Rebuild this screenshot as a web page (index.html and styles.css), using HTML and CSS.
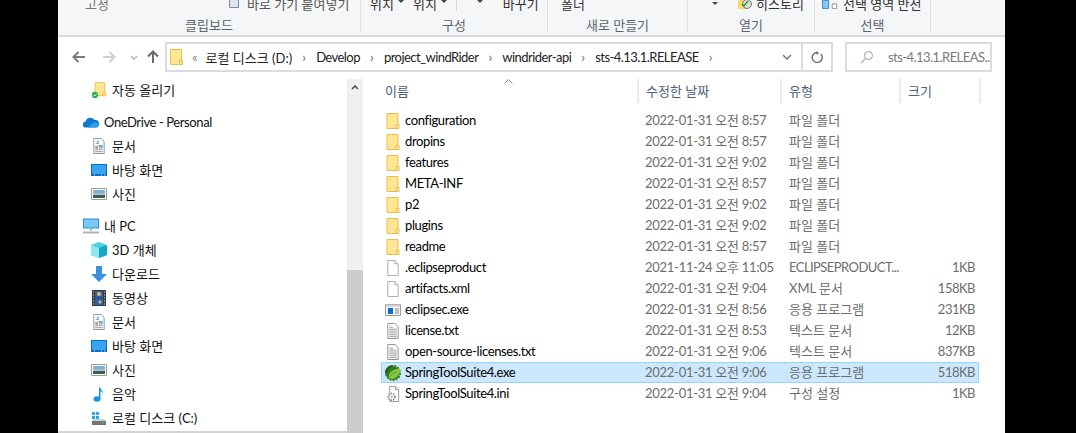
FILE: index.html
```html
<!DOCTYPE html>
<html lang="ko">
<head>
<meta charset="UTF-8">
<title>sts-4.13.1.RELEASE</title>
<link rel="stylesheet" href="styles.css">
</head>
<body>
<svg class="defs" width="0" height="0">
    <symbol id="folder" viewBox="0 0 13 16">
        <path d="M.5.5h11v15H.5z" fill="#ffe692" stroke="#e6c04f"/>
        <path d="M9.5 11.500h3v4h-3z" fill="#ffe692" stroke="#e6c04f"/>
    </symbol>
    <symbol id="file" viewBox="0 0 14 17">
        <path d="M1.500.5h7.500l3.500 3.500v12.500h-11z" fill="#fff" stroke="#a8a8a8"/>
        <path d="M9 .5v3.500h3.500" fill="#f0f0f0" stroke="#a8a8a8"/>
    </symbol>
    <symbol id="text" viewBox="0 0 14 17">
        <path d="M1.500.5h7.500l3.500 3.500v12.500h-11z" fill="#fff" stroke="#8c8c8c"/>
        <path d="M3 6.500h8M3 8.500h8M3 10.500h8M3 12.500h8M3 14.500h8M3 4.500h4" stroke="#9a9a9a"/>
    </symbol>
    <symbol id="doc" viewBox="0 0 14 17">
        <path d="M1.500.5h7.500l3.500 3.500v12.500h-11z" fill="#fff" stroke="#8c8c8c"/>
        <path d="M3 8.500h8M3 12.500h8M3 14.500h8" stroke="#9a9a9a"/>
        <path d="M5 3.500h2M4 5.500h3M7 8.500h4M7 10.500h4" stroke="#2f7fc8"/>
        <path d="M3 10.500h3" stroke="#3a3a3a"/>
    </symbol>
    <symbol id="desktop" viewBox="0 0 16 12">
        <path d="M0 0h16v12h-16z" fill="#0f6cbd"/>
        <path d="M1 1h14v9h-14z" fill="#35a4f4"/>
        <path d="M3 11h1M10 11h1M13 11h1" stroke="#cfe8fb"/>
    </symbol>
    <symbol id="picture" viewBox="0 0 16 12">
        <path d="M.5.5h15v11h-15z" fill="#fff" stroke="#9a9a9a"/>
        <path d="M2 2h12v4h-12z" fill="#7fb2dc"/>
        <path d="M2 5l5 1 7-1v2h-12z" fill="#b8c8b0"/>
        <path d="M2 7h12v3h-12z" fill="#3f5f5a"/>
    </symbol>
    <symbol id="exe" viewBox="0 0 16 12">
        <path d="M.5.500h15v11h-15z" fill="#f4f4f4" stroke="#9a9a9a"/>
        <path d="M.5.500h15v2h-15z" fill="#cfcfcf"/>
        <path d="M3 4h5v6h-5z" fill="#0a6fd0"/>
        <path d="M10 5h4M10 7h4M10 9h4" stroke="#8a8a8a"/>
    </symbol>
    <symbol id="pin" viewBox="0 0 16 18">
        <path d="M3.500.5h11v15h-11z" fill="#ffe692" stroke="#e6c04f"/>
        <path d="M12.500 11.500h3v4h-3z" fill="#ffe692" stroke="#e6c04f"/>
        <circle cx="3.500" cy="14.500" r="3.500" fill="#21b35a"/>
        <path d="M1.800 14.500l1.300 1.300 2.300-2.500" fill="none" stroke="#fff"/>
    </symbol>
    <symbol id="cloud" viewBox="0 0 16 11">
        <path d="M3 11a3 3 0 0 1-.500-6 5 5 0 0 1 9-1.500 3.800 3.800 0 0 1 1.500 7.500z" fill="#0f78d4"/>
        <path d="M5 11l4-4 3-1.500 4 2.500-2 3z" fill="#2c9de8"/>
    </symbol>
    <symbol id="pc" viewBox="0 0 16 15">
        <path d="M0 0h16v10h-16z" fill="#2b8fdc"/>
        <path d="M1 1h14v8h-14z" fill="#7cc8f8"/>
        <path d="M7 10h2v2h-2z" fill="#9aa4ac"/>
        <path d="M0 14h16" stroke="#a9b4bd" stroke-width="2"/>
    </symbol>
    <symbol id="cube" viewBox="0 0 16 16">
        <path d="M8 0l8 3v10l-8 3-8-3v-10z" fill="#45d3e3"/>
        <path d="M8 6l8-3v10l-8 3z" fill="#16a6c0"/>
        <path d="M0 3l8 3v10l-8-3z" fill="#8ce6ef"/>
    </symbol>
    <symbol id="down" viewBox="0 0 16 16">
        <path d="M5 0h6v8h5l-8 8-8-8h5z" fill="#3c8ede"/>
    </symbol>
    <symbol id="video" viewBox="0 0 14 16">
        <path d="M0 0h14v16h-14z" fill="#3b3b3b"/>
        <path d="M3 1h8v6.500h-8zM3 8.500h8v6.500h-8z" fill="#2f62c0"/>
        <circle cx="7" cy="4" r="2" fill="#e2c23a"/>
        <circle cx="8" cy="12" r="1.500" fill="#e2c23a"/>
        <path d="M1 2h1M1 5h1M1 8h1M1 11h1M1 14h1M12 2h1M12 5h1M12 8h1M12 11h1M12 14h1" stroke="#ddd"/>
    </symbol>
    <symbol id="music" viewBox="0 0 12 16">
        <ellipse cx="4" cy="13" rx="3.500" ry="2.800" fill="#1295e6"/>
        <path d="M6 13v-13c.5 3 4.500 4 4 8-.5-2-2-3-2.500-3v8z" fill="#1295e6"/>
    </symbol>
    <symbol id="drive" viewBox="0 0 16 14">
        <path d="M1 1h3v3h-3zM5 1h3v3h-3zM1 5h3v3h-3zM5 5h3v3h-3z" fill="#25a8e8"/>
        <path d="M3 8h10l2 2h-14z" fill="#d0d0d0"/>
        <path d="M1 10h14v4h-14z" fill="#6f7478"/>
        <path d="M11 11.500h2v1h-2z" fill="#4ee04e"/>
    </symbol>
    <symbol id="spring" viewBox="0 0 16 16">
        <circle cx="8" cy="8" r="6.800" fill="#2f7d22" stroke="#2f7d22" stroke-width="2.400" stroke-dasharray="2 1"/>
        <path d="M0 8a8 8 0 0 1 8-8l-1 2-3 1-1 3-1 2-1 2z" fill="#1f5f18"/>
        <path d="M4 12.500c-1-5 4-8.500 11-9 .5 6-3.500 10.500-9 10.500z" fill="#8cc63f"/>
        <path d="M4 12.500c3-4 5-5 8-6" fill="none" stroke="#5fa32c"/>
    </symbol>
    <symbol id="ini" viewBox="0 0 14 17">
        <path d="M3.500.5h6l3.500 3.500v12.500h-9.500z" fill="#fff" stroke="#9a9a9a"/>
        <path d="M9.500 .5v3.500h3.500" fill="none" stroke="#9a9a9a"/>
        <circle cx="5.500" cy="11.500" r="3.500" fill="#fff" stroke="#8c8c8c" stroke-width="2" stroke-dasharray="1.500 1"/>
        <circle cx="5.500" cy="11.500" r="1.500" fill="#c4c4c4"/>
    </symbol>
</svg>

<div class="window">
    <div class="ribbon">
        <div class="group g-clip"><div class="tools t-clip"><span class="pin-word">고정</span><svg class="mini" viewBox="0 0 10 10"><path d="M.5.500h9v9h-9z" fill="#dfe6ee" stroke="#7f8fa3"/></svg><span>바로 가기 붙여넣기</span></div><div class="label">클립보드</div></div>
        <div class="group g-org"><div class="tools t-org"><span>위치</span><i class="caret"></i><span>위치</span><i class="caret"></i><b class="tick"></b><i class="caret solo"></i><span>바꾸기</span></div><div class="label">구성</div></div>
        <div class="group g-new"><div class="tools t-new"><span>폴더</span></div><div class="label">새로 만들기</div></div>
        <div class="group g-open"><div class="tools t-open"><i class="caret"></i><svg class="mini hist" viewBox="0 0 14 12"><path d="M0 0h8v12h-8z" fill="#ffd966"/><circle cx="9" cy="7" r="4.500" fill="#ddd" stroke="#777"/><path d="M4 7l2 2 4-5" fill="none" stroke="#2a9d2a" stroke-width="1.500"/></svg><span>히스토리</span></div><div class="label">열기</div></div>
        <div class="group g-sel"><div class="tools t-sel"><svg class="mini pair" viewBox="0 0 18 12"><path d="M.5 2.500h7v9h-7z" fill="#8cc4f0" stroke="#2f7fc8"/><path d="M11.500 6.500h5v5h-5z" fill="#fff" stroke="#8c8c8c"/></svg><span>선택 영역 반전</span></div><div class="label">선택</div></div>
    </div>

    <div class="toolbar">
        <div class="nav-buttons">
            <svg class="arrow" viewBox="0 0 14 12"><path d="M13 6h-11M6.500 1l-5 5 5 5" fill="none" stroke="#7a7a7a" stroke-width="2"/></svg>
            <svg class="arrow off" viewBox="0 0 14 12"><path d="M1 6h11M7.500 1l5 5-5 5" fill="none" stroke="#cfcfcf" stroke-width="2"/></svg>
            <svg class="chev" viewBox="0 0 8 5"><path d="M1 1l3 3 3-3" fill="none" stroke="#b5b5b5" stroke-width="1.500"/></svg>
            <svg class="arrow up" viewBox="0 0 12 14"><path d="M6 13v-11M1 6.500l5-5 5 5" fill="none" stroke="#6a6a6a" stroke-width="2"/></svg>
        </div>
        <div class="address">
            <div class="crumbs">
                <svg class="ico-folder"><use href="#folder"/></svg>
                <span class="more">«</span>
                <span>로컬 디스크 (D:)</span><span class="sep">›</span>
                <span class="tight">Develop</span><span class="sep">›</span>
                <span class="tight">project_windRider</span><span class="sep">›</span>
                <span class="tight">windrider-api</span><span class="sep">›</span>
                <span class="tight">sts-4.13.1.RELEASE</span><span class="sep">›</span>
            </div>
            <div class="addr-drop"><svg viewBox="0 0 10 6"><path d="M1 1l4 4 4-4" fill="none" stroke="#7a7a7a" stroke-width="1.500"/></svg></div>
            <div class="addr-refresh"><svg viewBox="0 0 12 12"><path d="M9.800 3a5 5 0 1 1-3.800-1.500h1" fill="none" stroke="#6a6a6a" stroke-width="1.400"/><path d="M5.500 0v4l2.500-2z" fill="#6a6a6a"/></svg></div>
        </div>
        <div class="search">
            <svg viewBox="0 0 14 14"><circle cx="8.500" cy="5.500" r="4" fill="none" stroke="#9a9a9a"/><path d="M5.500 8.500l-4.500 4.500" stroke="#c9a98e" stroke-width="1.300"/></svg>
            <span class="tight">sts-4.13.1.RELEAS...</span>
        </div>
    </div>

    <div class="content">
        <div class="nav-pane">
            <div class="nav-list">
                <div class="nav-group">
                    <div class="nav-row child"><svg class="i16"><use href="#pin"/></svg>자동 올리기</div>
                </div>
                <div class="nav-group">
                    <div class="nav-row"><svg class="i16"><use href="#cloud"/></svg><span class="latin">OneDrive - Personal</span></div>
                    <div class="nav-row child"><svg class="i16"><use href="#doc"/></svg>문서</div>
                    <div class="nav-row child"><svg class="i16"><use href="#desktop"/></svg>바탕 화면</div>
                    <div class="nav-row child"><svg class="i16"><use href="#picture"/></svg>사진</div>
                </div>
                <div class="nav-group">
                    <div class="nav-row"><svg class="i16"><use href="#pc"/></svg>내 PC</div>
                    <div class="nav-row child"><svg class="i16"><use href="#cube"/></svg>3D 개체</div>
                    <div class="nav-row child"><svg class="i16"><use href="#down"/></svg>다운로드</div>
                    <div class="nav-row child"><svg class="i16"><use href="#video"/></svg>동영상</div>
                    <div class="nav-row child"><svg class="i16"><use href="#doc"/></svg>문서</div>
                    <div class="nav-row child"><svg class="i16"><use href="#desktop"/></svg>바탕 화면</div>
                    <div class="nav-row child"><svg class="i16"><use href="#picture"/></svg>사진</div>
                    <div class="nav-row child"><svg class="i16"><use href="#music"/></svg>음악</div>
                    <div class="nav-row child"><svg class="i16"><use href="#drive"/></svg>로컬 디스크 (C:)</div>
                </div>
            </div>
            <div class="hscroll"></div>
        </div>
        <div class="vscroll">
            <div class="vscroll-up"><svg viewBox="0 0 8 5"><path d="M1 4l3-3 3 3" fill="none" stroke="#505050" stroke-width="1.600"/></svg></div>
            <div class="vscroll-thumb"></div>
        </div>

        <div class="files">
            <svg class="sort" viewBox="0 0 9 5"><path d="M.5 4.500l4-4 4 4" fill="none" stroke="#8a8a8a"/></svg>
            <div class="head">
                <div class="hcell first">이름</div>
                <div class="hcell">수정한 날짜</div>
                <div class="hcell">유형</div>
                <div class="hcell">크기</div>
            </div>
            <div class="rows">
                <div class="row"><svg class="i16"><use href="#folder"/></svg><span class="name">configuration</span><span class="date">2022-01-31 오전 8:57</span><span>파일 폴더</span><span class="size"></span></div>
                <div class="row"><svg class="i16"><use href="#folder"/></svg><span class="name">dropins</span><span class="date">2022-01-31 오전 8:57</span><span>파일 폴더</span><span class="size"></span></div>
                <div class="row"><svg class="i16"><use href="#folder"/></svg><span class="name">features</span><span class="date">2022-01-31 오전 9:02</span><span>파일 폴더</span><span class="size"></span></div>
                <div class="row"><svg class="i16"><use href="#folder"/></svg><span class="name">META-INF</span><span class="date">2022-01-31 오전 8:57</span><span>파일 폴더</span><span class="size"></span></div>
                <div class="row"><svg class="i16"><use href="#folder"/></svg><span class="name">p2</span><span class="date">2022-01-31 오전 9:02</span><span>파일 폴더</span><span class="size"></span></div>
                <div class="row"><svg class="i16"><use href="#folder"/></svg><span class="name">plugins</span><span class="date">2022-01-31 오전 9:02</span><span>파일 폴더</span><span class="size"></span></div>
                <div class="row"><svg class="i16"><use href="#folder"/></svg><span class="name">readme</span><span class="date">2022-01-31 오전 8:57</span><span>파일 폴더</span><span class="size"></span></div>
                <div class="row"><svg class="i16"><use href="#file"/></svg><span class="name">.eclipseproduct</span><span class="date">2021-11-24 오후 11:05</span><span class="tight">ECLIPSEPRODUCT...</span><span class="size">1KB</span></div>
                <div class="row"><svg class="i16"><use href="#file"/></svg><span class="name">artifacts.xml</span><span class="date">2022-01-31 오전 9:04</span><span>XML 문서</span><span class="size">158KB</span></div>
                <div class="row"><svg class="i16"><use href="#exe"/></svg><span class="name">eclipsec.exe</span><span class="date">2022-01-31 오전 8:56</span><span>응용 프로그램</span><span class="size">231KB</span></div>
                <div class="row"><svg class="i16"><use href="#text"/></svg><span class="name">license.txt</span><span class="date">2022-01-31 오전 8:53</span><span>텍스트 문서</span><span class="size">12KB</span></div>
                <div class="row"><svg class="i16"><use href="#text"/></svg><span class="name">open-source-licenses.txt</span><span class="date">2022-01-31 오전 9:06</span><span>텍스트 문서</span><span class="size">837KB</span></div>
                <div class="row selected"><svg class="i16"><use href="#spring"/></svg><span class="name">SpringToolSuite4.exe</span><span class="date">2022-01-31 오전 9:06</span><span>응용 프로그램</span><span class="size">518KB</span></div>
                <div class="row"><svg class="i16"><use href="#ini"/></svg><span class="name">SpringToolSuite4.ini</span><span class="date">2022-01-31 오전 9:04</span><span>구성 설정</span><span class="size">1KB</span></div>
            </div>
        </div>
    </div>
</div>
</body>
</html>
```
FILE: styles.css
```css
* {
    box-sizing: border-box;
}
html, body {
    margin: 0;
    height: 433px;
    overflow: hidden;
    background: #000;
}
body {
    font-family: Lato, "Noto Sans CJK KR", sans-serif;
    font-size: 13px;
    color: #000;
}
.defs {
    position: absolute;
}
.window {
    width: 947px;
    height: 433px;
    margin-left: 58px;
    background: #fff;
    display: flex;
    flex-direction: column;
    overflow: hidden;
}
.tight {
    letter-spacing: -0.55px;
}
.latin {
    letter-spacing: -0.4px;
    margin-top: 2px;
}

/* ribbon, cut off at the top of the picture */
.ribbon {
    height: 37px;
    flex: none;
    display: flex;
    background: #f5f6f7;
    border-bottom: 2px solid #dadbdc;
    overflow: hidden;
}
.group {
    height: 33px;
    display: flex;
    flex-direction: column;
    justify-content: flex-end;
    border-right: 1px solid #dfe0e1;
    flex: none;
}
.g-clip { width: 303px; }
.g-org { width: 187px; }
.g-new { width: 140px; }
.g-open { width: 127px; }
.g-sel { width: 116px; }
.label {
    height: 16px;
    line-height: 16px;
    text-align: center;
    color: #5c6470;
    flex: none;
}
.tools {
    display: flex;
    align-items: center;
    height: 16px;
    margin-bottom: 6px;
    flex: none;
    white-space: nowrap;
    color: #333;
}
.t-clip { padding-left: 27px; color: #555; }
.pin-word { width: 144px; color: #777; }
.t-clip .mini { margin-right: 8px; }
.t-org { padding-left: 9px; }
.t-org .caret { margin: 0 9px 0 4px; }
.t-new { padding-left: 13px; }
.t-open { padding-left: 24px; }
.t-open .caret { margin-right: 20px; }
.t-sel { padding-left: 7px; gap: 5px; }
.tick {
    width: 1px;
    height: 16px;
    background: #d8d8d8;
}
.solo {
    margin: 0 20px !important;
}
.caret {
    width: 0;
    height: 0;
    border: 3px solid transparent;
    border-top: 3px solid #444;
    margin-top: 3px;
    flex: none;
}
.mini {
    width: 10px;
    height: 10px;
    flex: none;
}
.hist {
    width: 14px;
    height: 12px;
    margin-right: 4px;
}
.pair {
    width: 16px;
    height: 11px;
}

/* back / forward and address row */
.toolbar {
    height: 41px;
    flex: none;
    display: flex;
    align-items: flex-start;
    padding-top: 5px;
}
.nav-buttons {
    width: 107px;
    height: 30px;
    display: flex;
    align-items: center;
    padding-left: 14px;
    flex: none;
}
.arrow {
    width: 14px;
    height: 12px;
    margin-right: 16px;
}
.arrow.off {
    margin-right: 14px;
}
.chev {
    width: 8px;
    height: 5px;
    margin-right: 9px;
}
.arrow.up {
    width: 12px;
    height: 14px;
    margin: 0;
}
.address {
    width: 668px;
    height: 30px;
    border: 2px solid #dcdcdc;
    display: flex;
    flex: none;
}
.crumbs {
    flex: 1;
    display: flex;
    align-items: center;
    padding-left: 3px;
    white-space: nowrap;
    color: #222;
}
.ico-folder {
    width: 13px;
    height: 16px;
    margin-right: 9px;
}
.more {
    color: #888;
    margin-right: 8px;
}
.sep {
    color: #888;
    width: 24px;
    text-align: center;
    font-weight: bold;
}
.addr-drop {
    width: 28px;
    display: flex;
    align-items: center;
    justify-content: center;
}
.addr-drop svg {
    width: 10px;
    height: 6px;
}
.addr-refresh {
    width: 30px;
    border-left: 2px solid #dcdcdc;
    display: flex;
    align-items: center;
    justify-content: center;
}
.addr-refresh svg {
    width: 12px;
    height: 12px;
}
.search {
    width: 147px;
    height: 30px;
    margin-left: 12px;
    border: 2px solid #dcdcdc;
    display: flex;
    align-items: center;
    padding-left: 13px;
    gap: 14px;
    color: #7a7a7a;
    white-space: nowrap;
    overflow: hidden;
    flex: none;
}
.search svg {
    width: 14px;
    height: 14px;
    flex: none;
}

/* navigation pane */
.content {
    flex: 1;
    display: flex;
    min-height: 0;
}
.nav-pane {
    width: 289px;
    flex: none;
    display: flex;
    flex-direction: column;
}
.nav-list {
    flex: 1;
    display: flex;
    flex-direction: column;
    gap: 8px;
    overflow: hidden;
}
.nav-row {
    height: 24px;
    display: flex;
    align-items: center;
    padding-left: 25px;
    padding-bottom: 2px;
    gap: 5px;
    white-space: nowrap;
    color: #111;
}
.nav-row.child {
    padding-left: 33px;
}
.nav-row .i16 {
    margin-top: 2px;
}
.hscroll {
    height: 2px;
    background: #d4d4d4;
    flex: none;
}
.i16 {
    width: 16px;
    height: 16px;
    flex: none;
}
.vscroll {
    width: 16px;
    flex: none;
    margin-top: 1px;
    background: #f0f0f0;
    display: flex;
    flex-direction: column;
}
.vscroll-up {
    height: 17px;
    display: flex;
    align-items: center;
    justify-content: center;
}
.vscroll-up svg {
    width: 8px;
    height: 5px;
}
.vscroll-thumb {
    margin-top: 174px;
    flex: 1;
    background: #cdcdcd;
}

/* file list */
.files {
    position: relative;
    flex: 1;
    padding-left: 18px;
}
.sort {
    position: absolute;
    left: 141px;
    top: 1px;
    width: 9px;
    height: 5px;
}
.head, .row {
    display: grid;
    grid-template-columns: 23px 240px 144px 119px 72px;
    width: 598px;
}
.head {
    height: 24px;
    margin-top: 1px;
    width: 600px;
    grid-template-columns: 258px 143px 119px 80px;
    color: #4c607a;
}
.hcell {
    display: flex;
    align-items: center;
    padding-left: 7px;
    padding-bottom: 2px;
    border-right: 2px solid #eaeaea;
}
.hcell.first {
    padding-left: 4px;
}
.rows {
    margin-top: 7px;
}
.row {
    height: 21px;
    line-height: 15px;
    align-items: center;
    border: 1px solid transparent;
    color: #6d6d6d;
    white-space: nowrap;
}
.row .name {
    color: #000;
    letter-spacing: -0.38px;
}
.row .date {
    letter-spacing: -0.27px;
}
.row .i16 {
    margin-left: 3px;
}
.row .size {
    text-align: right;
    padding-right: 5px;
    letter-spacing: -0.5px;
}
.row.selected {
    background: #cce8ff;
    border-color: #99d1ff;
}
```
